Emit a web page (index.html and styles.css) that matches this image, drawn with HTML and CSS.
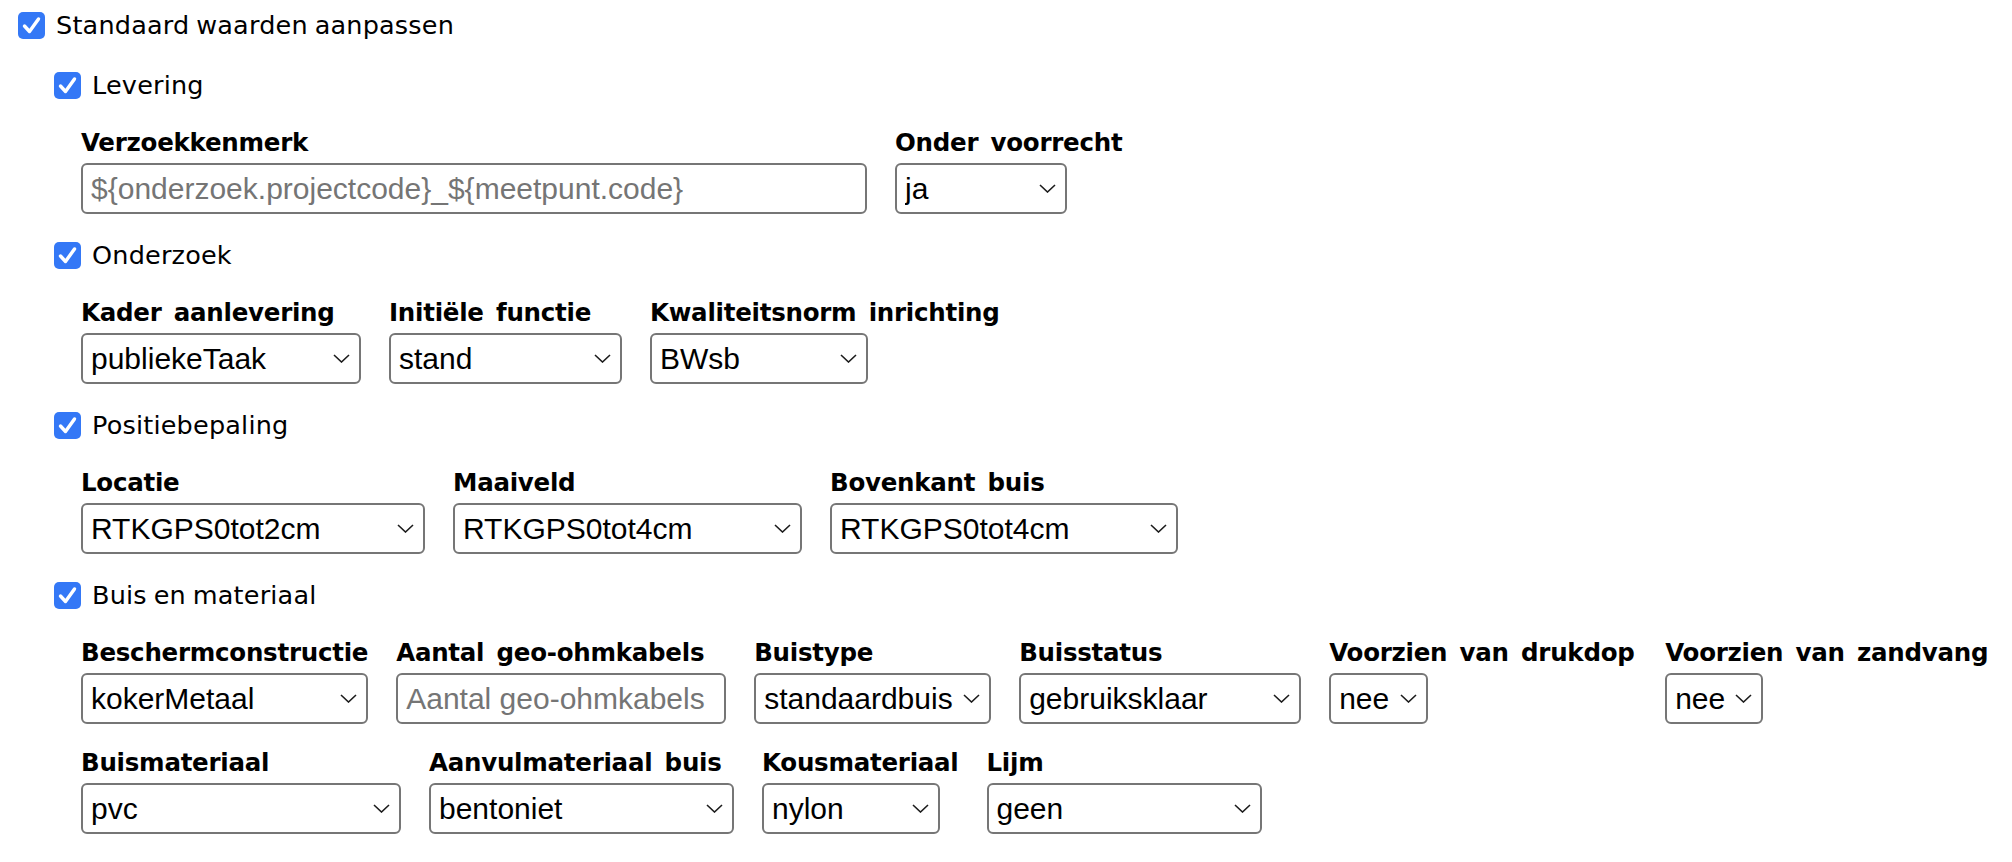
FILE: index.html
```html
<!DOCTYPE html>
<html lang="nl">
<head>
<meta charset="utf-8">
<title>Standaard waarden</title>
<link rel="stylesheet" href="styles.css">
</head>
<body>
<form class="form">
  <label class="check">
    <span class="box"><svg viewBox="0 0 27 27" width="27" height="27"><path d="M6.5 14 L11.5 19.5 L20.5 7" fill="none" stroke="#fff" stroke-width="3.4" stroke-linecap="round" stroke-linejoin="round"/></svg></span>
    <span>Standaard waarden aanpassen</span>
  </label>

  <div class="sections">
    <section class="section">
      <label class="check">
        <span class="box"><svg viewBox="0 0 27 27" width="27" height="27"><path d="M6.5 14 L11.5 19.5 L20.5 7" fill="none" stroke="#fff" stroke-width="3.4" stroke-linecap="round" stroke-linejoin="round"/></svg></span>
        <span>Levering</span>
      </label>
      <div class="row">
        <div class="field">
          <label class="flabel">Verzoekkenmerk</label>
          <input class="text w-786" type="text" placeholder="${onderzoek.projectcode}_${meetpunt.code}">
        </div>
        <div class="field">
          <label class="flabel">Onder voorrecht</label>
          <span class="select w-172"><select><option>ja</option><option>nee</option></select><svg class="chev" viewBox="0 0 17 9" width="17" height="9"><polyline points="1,1 8.5,8 16,1" fill="none" stroke="#1c1c1c" stroke-width="1.6"/></svg></span>
        </div>
      </div>
    </section>

    <section class="section">
      <label class="check">
        <span class="box"><svg viewBox="0 0 27 27" width="27" height="27"><path d="M6.5 14 L11.5 19.5 L20.5 7" fill="none" stroke="#fff" stroke-width="3.4" stroke-linecap="round" stroke-linejoin="round"/></svg></span>
        <span>Onderzoek</span>
      </label>
      <div class="row">
        <div class="field">
          <label class="flabel">Kader aanlevering</label>
          <span class="select w-280"><select><option>publiekeTaak</option></select><svg class="chev" viewBox="0 0 17 9" width="17" height="9"><polyline points="1,1 8.5,8 16,1" fill="none" stroke="#1c1c1c" stroke-width="1.6"/></svg></span>
        </div>
        <div class="field">
          <label class="flabel">Initiële functie</label>
          <span class="select w-233"><select><option>stand</option></select><svg class="chev" viewBox="0 0 17 9" width="17" height="9"><polyline points="1,1 8.5,8 16,1" fill="none" stroke="#1c1c1c" stroke-width="1.6"/></svg></span>
        </div>
        <div class="field">
          <label class="flabel">Kwaliteitsnorm inrichting</label>
          <span class="select w-218"><select><option>BWsb</option></select><svg class="chev" viewBox="0 0 17 9" width="17" height="9"><polyline points="1,1 8.5,8 16,1" fill="none" stroke="#1c1c1c" stroke-width="1.6"/></svg></span>
        </div>
      </div>
    </section>

    <section class="section">
      <label class="check">
        <span class="box"><svg viewBox="0 0 27 27" width="27" height="27"><path d="M6.5 14 L11.5 19.5 L20.5 7" fill="none" stroke="#fff" stroke-width="3.4" stroke-linecap="round" stroke-linejoin="round"/></svg></span>
        <span>Positiebepaling</span>
      </label>
      <div class="row">
        <div class="field">
          <label class="flabel">Locatie</label>
          <span class="select w-344"><select><option>RTKGPS0tot2cm</option></select><svg class="chev" viewBox="0 0 17 9" width="17" height="9"><polyline points="1,1 8.5,8 16,1" fill="none" stroke="#1c1c1c" stroke-width="1.6"/></svg></span>
        </div>
        <div class="field">
          <label class="flabel">Maaiveld</label>
          <span class="select w-349"><select><option>RTKGPS0tot4cm</option></select><svg class="chev" viewBox="0 0 17 9" width="17" height="9"><polyline points="1,1 8.5,8 16,1" fill="none" stroke="#1c1c1c" stroke-width="1.6"/></svg></span>
        </div>
        <div class="field">
          <label class="flabel">Bovenkant buis</label>
          <span class="select w-348"><select><option>RTKGPS0tot4cm</option></select><svg class="chev" viewBox="0 0 17 9" width="17" height="9"><polyline points="1,1 8.5,8 16,1" fill="none" stroke="#1c1c1c" stroke-width="1.6"/></svg></span>
        </div>
      </div>
    </section>

    <section class="section">
      <label class="check">
        <span class="box"><svg viewBox="0 0 27 27" width="27" height="27"><path d="M6.5 14 L11.5 19.5 L20.5 7" fill="none" stroke="#fff" stroke-width="3.4" stroke-linecap="round" stroke-linejoin="round"/></svg></span>
        <span>Buis en materiaal</span>
      </label>
      <div class="row">
        <div class="field">
          <label class="flabel">Beschermconstructie</label>
          <span class="select w-287"><select><option>kokerMetaal</option></select><svg class="chev" viewBox="0 0 17 9" width="17" height="9"><polyline points="1,1 8.5,8 16,1" fill="none" stroke="#1c1c1c" stroke-width="1.6"/></svg></span>
        </div>
        <div class="field">
          <label class="flabel">Aantal geo-ohmkabels</label>
          <input class="text w-330" type="text" placeholder="Aantal geo-ohmkabels">
        </div>
        <div class="field">
          <label class="flabel">Buistype</label>
          <span class="select w-237"><select><option>standaardbuis</option></select><svg class="chev" viewBox="0 0 17 9" width="17" height="9"><polyline points="1,1 8.5,8 16,1" fill="none" stroke="#1c1c1c" stroke-width="1.6"/></svg></span>
        </div>
        <div class="field">
          <label class="flabel">Buisstatus</label>
          <span class="select w-282"><select><option>gebruiksklaar</option></select><svg class="chev" viewBox="0 0 17 9" width="17" height="9"><polyline points="1,1 8.5,8 16,1" fill="none" stroke="#1c1c1c" stroke-width="1.6"/></svg></span>
        </div>
        <div class="field f-drukdop">
          <label class="flabel">Voorzien van drukdop</label>
          <span class="select w-99"><select><option>nee</option></select><svg class="chev" viewBox="0 0 17 9" width="17" height="9"><polyline points="1,1 8.5,8 16,1" fill="none" stroke="#1c1c1c" stroke-width="1.6"/></svg></span>
        </div>
        <div class="field">
          <label class="flabel">Voorzien van zandvang</label>
          <span class="select w-98"><select><option>nee</option></select><svg class="chev" viewBox="0 0 17 9" width="17" height="9"><polyline points="1,1 8.5,8 16,1" fill="none" stroke="#1c1c1c" stroke-width="1.6"/></svg></span>
        </div>
      </div>
      <div class="row">
        <div class="field">
          <label class="flabel">Buismateriaal</label>
          <span class="select w-320"><select><option>pvc</option></select><svg class="chev" viewBox="0 0 17 9" width="17" height="9"><polyline points="1,1 8.5,8 16,1" fill="none" stroke="#1c1c1c" stroke-width="1.6"/></svg></span>
        </div>
        <div class="field">
          <label class="flabel">Aanvulmateriaal buis</label>
          <span class="select w-305"><select><option>bentoniet</option></select><svg class="chev" viewBox="0 0 17 9" width="17" height="9"><polyline points="1,1 8.5,8 16,1" fill="none" stroke="#1c1c1c" stroke-width="1.6"/></svg></span>
        </div>
        <div class="field">
          <label class="flabel">Kousmateriaal</label>
          <span class="select w-178"><select><option>nylon</option></select><svg class="chev" viewBox="0 0 17 9" width="17" height="9"><polyline points="1,1 8.5,8 16,1" fill="none" stroke="#1c1c1c" stroke-width="1.6"/></svg></span>
        </div>
        <div class="field">
          <label class="flabel">Lijm</label>
          <span class="select w-275"><select><option>geen</option></select><svg class="chev" viewBox="0 0 17 9" width="17" height="9"><polyline points="1,1 8.5,8 16,1" fill="none" stroke="#1c1c1c" stroke-width="1.6"/></svg></span>
        </div>
      </div>
    </section>
  </div>
</form>
</body>
</html>
```

FILE: styles.css
```css
html, body {
  margin: 0;
  padding: 0;
  background: #ffffff;
}

body {
  color: #000;
  font-family: "DejaVu Sans", "Liberation Sans", sans-serif;
}

.form {
  display: flex;
  flex-direction: column;
  gap: 22px;
  padding: 6px 0 0 18px;
}

.sections {
  display: flex;
  flex-direction: column;
  gap: 22px;
  padding-left: 36px;
}

.section {
  display: flex;
  flex-direction: column;
  gap: 22px;
}

.check {
  display: flex;
  align-items: center;
  gap: 11px;
  height: 38px;
  font-size: 25.5px;
  letter-spacing: 0.2px;
  word-spacing: -1.5px;
  line-height: 38px;
}

.box {
  width: 27px;
  height: 27px;
  flex: 0 0 27px;
  border-radius: 5px;
  background: #3478f6;
  display: flex;
}

.row {
  display: flex;
  align-items: flex-start;
  gap: 28px;
  padding-left: 27px;
}

.field {
  display: flex;
  flex-direction: column;
  align-items: flex-start;
}

.f-drukdop {
  min-width: 308px;
}

.flabel {
  display: block;
  font-weight: bold;
  font-size: 24.5px;
  letter-spacing: -0.25px;
  word-spacing: 4px;
  line-height: 34px;
  margin-bottom: 3px;
  white-space: nowrap;
}

.text,
.select select {
  box-sizing: border-box;
  height: 51px;
  margin: 0;
  border: 2px solid #767676;
  border-radius: 6px;
  background: #fff;
  color: #000;
  font-family: "Liberation Sans", Arial, sans-serif;
  font-size: 30px;
}

.text {
  padding: 0 8px;
}

.text::placeholder {
  color: #757575;
  opacity: 1;
}

.select {
  position: relative;
  display: inline-block;
}

.select select {
  appearance: none;
  -webkit-appearance: none;
  width: 100%;
  padding: 0 34px 0 8px;
}

.chev {
  position: absolute;
  right: 11px;
  top: 21px;
  pointer-events: none;
}

.w-786 { width: 786px; }
.w-330 { width: 330px; }
.w-172 { width: 172px; }
.w-280 { width: 280px; }
.w-233 { width: 233px; }
.w-218 { width: 218px; }
.w-344 { width: 344px; }
.w-349 { width: 349px; }
.w-348 { width: 348px; }
.w-287 { width: 287px; }
.w-237 { width: 237px; }
.w-282 { width: 282px; }
.w-99 { width: 99px; }
.w-98 { width: 98px; }
.w-320 { width: 320px; }
.w-305 { width: 305px; }
.w-178 { width: 178px; }
.w-275 { width: 275px; }
```
